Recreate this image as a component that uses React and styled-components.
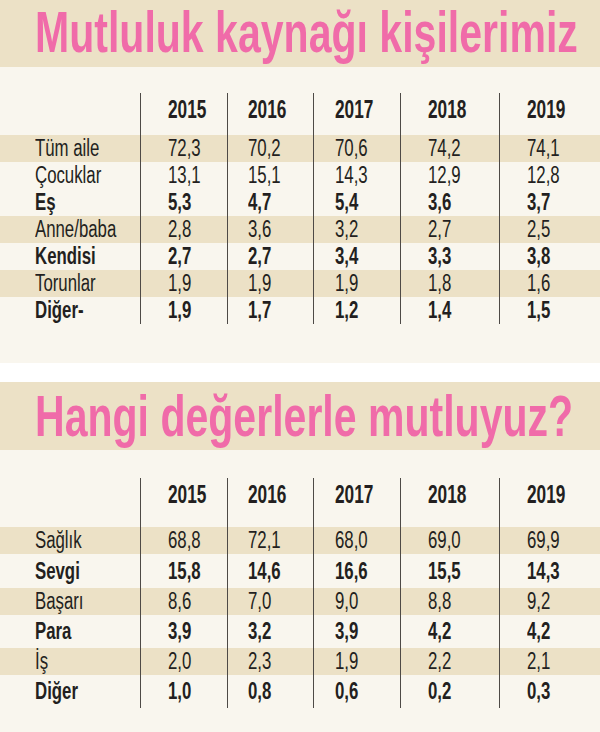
import React from "react";
import styled, { createGlobalStyle } from "styled-components";

const GlobalStyle = createGlobalStyle`
  html, body { margin: 0; padding: 0; background: #ffffff; overflow: hidden; }
  body { font-family: "Liberation Sans", Arial, sans-serif; }
`;

const COLS = "140px 87px 86px 87px 99px 101px";
const INDENT = [27, 20, 21, 27, 27];

const Page = styled.div`
  width: 600px;
  display: flex;
  flex-direction: column;
  gap: 19px;
`;

const Section = styled.section`
  background: #f9f6ee;
  display: flex;
  flex-direction: column;
  padding-bottom: ${(p) => p.$bottom}px;
`;

const TitleBand = styled.div`
  height: ${(p) => p.$h}px;
  background: #ece1c6;
  display: flex;
  align-items: center;
  padding-left: 35px;
  box-sizing: border-box;
`;

const Title = styled.h1`
  margin: 0;
  font-family: "Liberation Sans", Arial, sans-serif;
  font-weight: 700;
  font-size: 57px;
  line-height: 1;
  color: #f06ba9;
  white-space: nowrap;
  transform: scaleX(0.72);
  transform-origin: 0 50%;
  margin-top: ${(p) => p.$shift}px;
`;

const Table = styled.div`
  margin-top: ${(p) => p.$top}px;
  display: flex;
  flex-direction: column;
`;

const HeaderRow = styled.div`
  display: grid;
  grid-template-columns: ${COLS};
  height: ${(p) => p.$h}px;
`;

const Row = styled.div`
  display: grid;
  grid-template-columns: ${COLS};
  height: ${(p) => p.$h}px;
  background: ${(p) => (p.$band ? "#ece1c6" : "transparent")};
  font-weight: ${(p) => (p.$bold ? 700 : 400)};
`;

const LabelCell = styled.div`
  padding-left: 35px;
  display: flex;
  align-items: center;
`;

const ValueCell = styled.div`
  border-left: 1px solid #4e4a46;
  padding-left: ${(p) => p.$indent}px;
  display: flex;
  align-items: center;
`;

const YearCell = styled.div`
  border-left: 1px solid #4e4a46;
  padding-left: ${(p) => p.$indent}px;
  padding-top: 4px;
  box-sizing: border-box;
`;

const Txt = styled.span`
  display: inline-block;
  font-family: "Liberation Sans", Arial, sans-serif;
  font-size: 23px;
  line-height: 23px;
  color: #231f20;
  white-space: nowrap;
  transform: scaleX(0.73);
  transform-origin: 0 50%;
`;

const Year = styled.span`
  display: inline-block;
  font-family: "Liberation Sans", Arial, sans-serif;
  font-weight: 700;
  font-size: 25px;
  line-height: 25px;
  color: #231f20;
  white-space: nowrap;
  transform: scaleX(0.69);
  transform-origin: 0 50%;
`;

const YEARS = ["2015", "2016", "2017", "2018", "2019"];

const table1 = [
  { label: "Tüm aile", v: ["72,3", "70,2", "70,6", "74,2", "74,1"], band: true },
  { label: "Çocuklar", v: ["13,1", "15,1", "14,3", "12,9", "12,8"] },
  { label: "Eş", v: ["5,3", "4,7", "5,4", "3,6", "3,7"], bold: true },
  { label: "Anne/baba", v: ["2,8", "3,6", "3,2", "2,7", "2,5"], band: true },
  { label: "Kendisi", v: ["2,7", "2,7", "3,4", "3,3", "3,8"], bold: true },
  { label: "Torunlar", v: ["1,9", "1,9", "1,9", "1,8", "1,6"], band: true },
  { label: "Diğer-", v: ["1,9", "1,7", "1,2", "1,4", "1,5"], bold: true },
];

const table2 = [
  { label: "Sağlık", v: ["68,8", "72,1", "68,0", "69,0", "69,9"], band: true, h: 27 },
  { label: "Sevgi", v: ["15,8", "14,6", "16,6", "15,5", "14,3"], bold: true, h: 34 },
  { label: "Başarı", v: ["8,6", "7,0", "9,0", "8,8", "9,2"], band: true, h: 27 },
  { label: "Para", v: ["3,9", "3,2", "3,9", "4,2", "4,2"], bold: true, h: 33 },
  { label: "İş", v: ["2,0", "2,3", "1,9", "2,2", "2,1"], band: true, h: 27 },
  { label: "Diğer", v: ["1,0", "0,8", "0,6", "0,2", "0,3"], bold: true, h: 33 },
];

function DataTable({ rows, top, headerH }) {
  return (
    <Table $top={top}>
      <HeaderRow $h={headerH}>
        <div />
        {YEARS.map((y, i) => (
          <YearCell key={y} $indent={INDENT[i]}>
            <Year>{y}</Year>
          </YearCell>
        ))}
      </HeaderRow>
      {rows.map((r) => (
        <Row key={r.label} $band={r.band} $bold={r.bold} $h={r.h || 27}>
          <LabelCell>
            <Txt>{r.label}</Txt>
          </LabelCell>
          {r.v.map((val, i) => (
            <ValueCell key={i} $indent={INDENT[i]}>
              <Txt>{val}</Txt>
            </ValueCell>
          ))}
        </Row>
      ))}
    </Table>
  );
}

export default function App() {
  return (
    <>
      <GlobalStyle />
      <Page>
        <Section $bottom={39}>
          <TitleBand $h={67}>
            <Title $shift={-2}>Mutluluk kaynağı kişilerimiz</Title>
          </TitleBand>
          <DataTable rows={table1} top={26} headerH={42} />
        </Section>
        <Section $bottom={24}>
          <TitleBand $h={68}>
            <Title $shift={0}>Hangi değerlerle mutluyuz?</Title>
          </TitleBand>
          <DataTable rows={table2} top={28} headerH={49} />
        </Section>
      </Page>
    </>
  );
}
